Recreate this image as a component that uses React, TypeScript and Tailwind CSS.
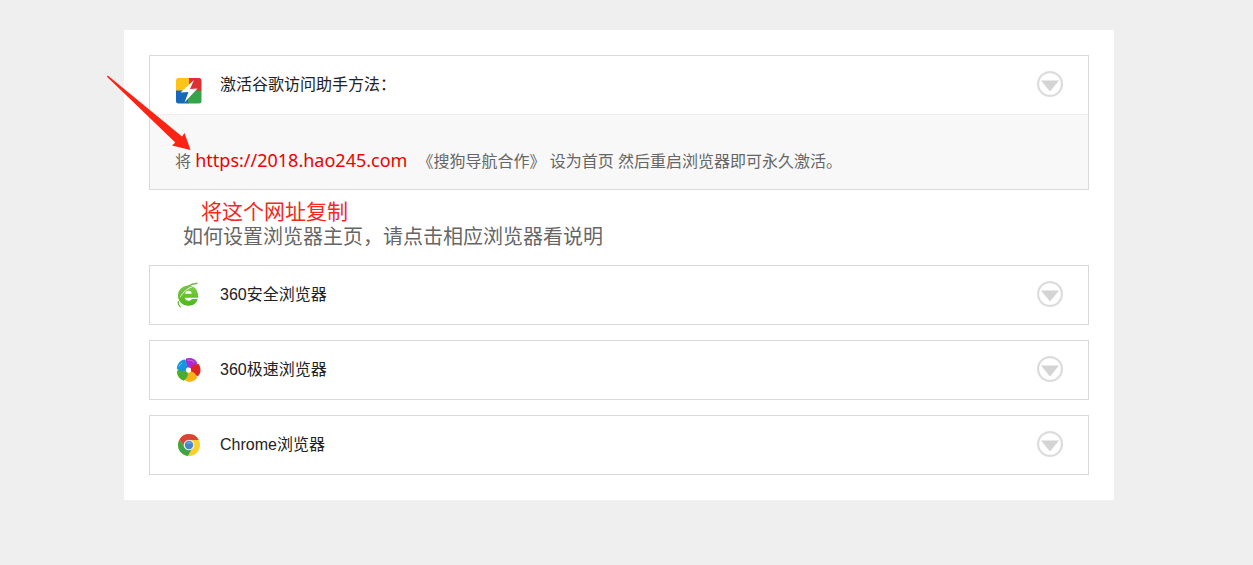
import type { ReactNode } from 'react';

const titleFont = 'font-["Liberation_Sans","Noto_Sans_CJK_SC",sans-serif]';
const bodyFont = 'font-["Noto_Sans","Noto_Sans_CJK_SC",sans-serif]';

function HelperIcon() {
  return (
    <svg viewBox="0 0 26 26" className="size-[26px]" aria-hidden="true">
      <defs>
        <clipPath id="helper">
          <rect x="0" y="0" width="25.5" height="25.5" rx="2.5" />
        </clipPath>
      </defs>
      <g clipPath="url(#helper)">
        <path d="M0 0h14v13H0z" fill="#fcc419" />
        <path d="M13 0h13v13H13z" fill="#dd3030" />
        <path d="M0 12.5h13V26H0z" fill="#1768b8" />
        <path d="M12 12.5h14V26H12z" fill="#35a34a" />
      </g>
      <path d="M18 2 4.500 14.500l8-.6L8.500 24.500 21.500 10.500l-7.500.5z" fill="#fff" />
    </svg>
  );
}

function SafeIcon() {
  return (
    <svg viewBox="0 0 26 26" className="size-[26px]" aria-hidden="true">
      <defs>
        <linearGradient id="safe" x1="0" y1="0" x2="0" y2="1">
          <stop offset="0" stopColor="#7fd040" />
          <stop offset="1" stopColor="#4fb51c" />
        </linearGradient>
      </defs>
      <path
        d="M12.500 3.500C6.500 3.500 2 7.800 2 13.500s4.300 10.200 10.500 10.200c4.700 0 8.200-2.500 9.300-6.700h-6c-.6 1.200-1.600 1.800-3 1.800-2.200 0-3.600-1.200-3.900-3h13.300c.2-7.500-3.500-12.300-9.700-12.300zM9 11.800c.4-2 1.600-3 3.500-3s3 1 3.300 3z"
        fill="url(#safe)"
      />
      <path d="M4 15C7.500 9.500 11.500 6.300 18 4" fill="none" stroke="#dff5cb" strokeWidth="1" />
      <path d="M21.500 1.300C14.500 1.500 6.500 6.500 3.200 14.500" fill="none" stroke="#73b455" strokeWidth="1.400" />
      <path d="M2.500 19c-.6 3 .2 5 2.500 6" fill="none" stroke="#69b844" strokeWidth="1.300" />
    </svg>
  );
}

const petals = [
  { color: '#ad2ad2', angle: 4 },
  { color: '#df2525', angle: 76 },
  { color: '#f6b316', angle: 148 },
  { color: '#49ad2b', angle: 220 },
  { color: '#1696df', angle: 292 },
];

function SpeedIcon() {
  return (
    <svg viewBox="0 0 26 26" className="size-[26px]" aria-hidden="true">
      {petals.map((petal) => (
        <path
          key={petal.color}
          d="M11.500 10.800C9 8.500 8 5 9.200 1.800 13.500 0 19 1.500 20.800 5.500 19.300 8.300 17.300 10 14.800 11z"
          fill={petal.color}
          transform={`rotate(${petal.angle} 12.500 13)`}
        />
      ))}
      <path d="M11.500 3.300c2.500-.5 5 .2 7 2" fill="none" stroke="#cf6fe8" strokeWidth="1" />
      <path d="M3.200 9.500c.6-1.700 1.500-2.700 2.800-3.700" fill="none" stroke="#64c6f4" strokeWidth="1" />
      <circle cx="12.500" cy="13" r="2.600" fill="#fff" />
    </svg>
  );
}

function ChromeIcon() {
  return (
    <svg viewBox="0 0 26 26" className="size-[26px]" aria-hidden="true">
      <circle cx="13" cy="13" r="11" fill="#fbd02c" />
      <path d="M3.500 7.500A11 11 0 0 1 22.800 8H13a5 5 0 0 0-4.800 6.300z" fill="#da4437" />
      <path d="M3.500 7.500a11 11 0 0 0 8.300 16.400l5-8.400A5 5 0 0 1 8.500 15.200z" fill="#3da34b" />
      <circle cx="13" cy="13" r="5.300" fill="#f3f3ee" />
      <circle cx="13" cy="13" r="4.200" fill="#4485c9" />
      <path d="M10 11.500a3.500 3.500 0 0 1 6 0z" fill="#75abdf" />
    </svg>
  );
}

function ToggleIcon() {
  return (
    <svg viewBox="0 0 26 26" className="size-[26px]" aria-hidden="true">
      <circle cx="13" cy="13" r="11.900" fill="none" stroke="#dcdcdc" strokeWidth="2.200" />
      <path d="M4 9.500h18L13 20.500z" fill="#d4d4d4" />
    </svg>
  );
}

function Arrow() {
  return (
    <svg
      viewBox="0 0 86 78"
      className="pointer-events-none absolute top-[45px] -left-[18px] h-[78px] w-[86px]"
      aria-hidden="true"
    >
      <path d="M1 .8Q2 .5 3 1.500L76 61.500l2.500-3.500L84.500 75 66 70.500l3.300-3L1.200 2z" fill="#fb2414" />
    </svg>
  );
}

type SectionProps = {
  title: string;
  icon: ReactNode;
  children?: ReactNode;
};

function Section({ title, icon, children }: SectionProps) {
  return (
    <section className="border border-[#d9d9d9]">
      <h2>
        <button
          type="button"
          aria-expanded={Boolean(children)}
          className="flex h-[58px] w-full cursor-pointer items-center pr-[25px] pl-[26px] text-left"
        >
          {icon}
          <span className={`ml-[18px] flex-1 text-base text-[#222222] ${titleFont}`}>{title}</span>
          <span className="pb-0.5">
            <ToggleIcon />
          </span>
        </button>
      </h2>
      {children}
    </section>
  );
}

const browsers = [
  { title: '360安全浏览器', icon: <SafeIcon /> },
  { title: '360极速浏览器', icon: <SpeedIcon /> },
  { title: 'Chrome浏览器', icon: <ChromeIcon /> },
];

export default function App() {
  return (
    <div className={`min-h-screen bg-[#efefef] py-[30px] pr-[15px] ${bodyFont}`}>
      <main className="relative mx-auto w-full max-w-[990px] bg-white p-[25px]">
        <Section
          title="激活谷歌访问助手方法："
          icon={
            <span className="pt-3">
              <HelperIcon />
            </span>
          }
        >
          <div className="border-t border-[#eeeeee] bg-[#f8f8f8] px-[25px] pt-[31px] pb-[14px] text-base leading-7 text-[#666666]">
            <p>
              将{' '}
              <a href="https://2018.hao245.com" className="mr-1.5 text-lg leading-7 text-[#ee0000]">
                https://2018.hao245.com
              </a>{' '}
              《搜狗导航合作》 设为首页 然后重启浏览器即可永久激活。
            </p>
          </div>
        </Section>

        <div className="px-[34px] pt-[9px] pb-4">
          <p className="pl-[18px] text-[21px] leading-[25px] text-[#f02a1d]">将这个网址复制</p>
          <p className="text-xl leading-[25px] text-[#666666]">如何设置浏览器主页，请点击相应浏览器看说明</p>
        </div>

        <div className="flex flex-col gap-[15px]">
          {browsers.map((browser) => (
            <Section key={browser.title} title={browser.title} icon={browser.icon} />
          ))}
        </div>

        <Arrow />
      </main>
    </div>
  );
}
